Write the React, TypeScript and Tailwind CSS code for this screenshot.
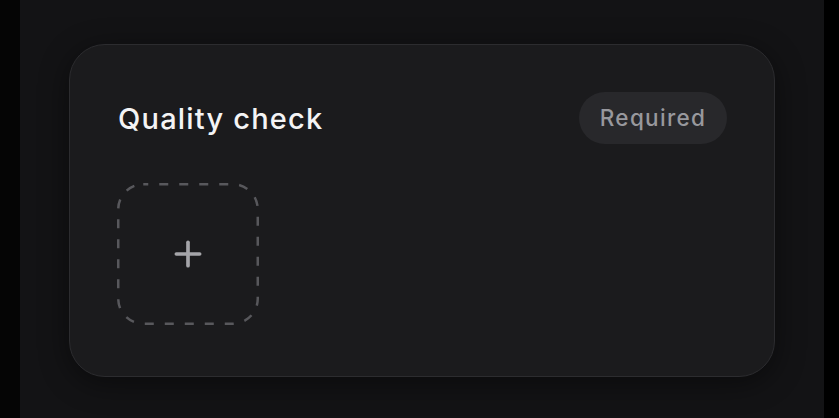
import { Plus } from 'lucide-react';

// ─── Component ────────────────────────────────────────────────────────────────

export default function App() {
  return (
    <div
      className="flex h-[418px] w-full bg-black"
      style={{ fontFamily: 'Inter, "Noto Sans", sans-serif' }}
    >
      <div className="w-[20px] shrink-0 bg-[#050505]" />

      <main className="flex-1 bg-[#131315] px-[49px] pt-[44px]">
        {/* ── Quality check card ── */}
        <section className="rounded-[36px] border border-[#2c2c2f] bg-[#1b1b1d] px-[47px] pt-[47px] pb-[51px] shadow-[0_6px_30px_rgba(0,0,0,0.45)]">
          <div className="flex items-center justify-between">
            <h2 className="pl-[1px] text-[29px] font-medium leading-none tracking-[1.2px] text-[#f4f4f5]">
              Quality check
            </h2>
            <span className="flex h-[52px] w-[148px] items-center justify-center rounded-full bg-[#28282b] text-[22.5px] font-medium tracking-[1.3px] text-[#98989d]">
              Required
            </span>
          </div>

          <button
            type="button"
            aria-label="Add photo"
            className="relative mt-[39px] flex h-[142px] w-[142px] items-center justify-center text-[#a5a5a9]"
          >
            <svg className="absolute inset-0" width="142" height="142" viewBox="0 0 142 142" fill="none" aria-hidden="true">
              <rect
                x="1.25" y="1.25" width="139.5" height="139.5" rx="25"
                stroke="#58585c" strokeWidth="2.5" strokeDasharray="9 11" strokeDashoffset="4"
              />
            </svg>
            <Plus className="h-[40px] w-[40px]" strokeWidth={2.2} />
          </button>
        </section>
      </main>

      <div className="w-[15px] shrink-0 bg-black" />
    </div>
  );
}
